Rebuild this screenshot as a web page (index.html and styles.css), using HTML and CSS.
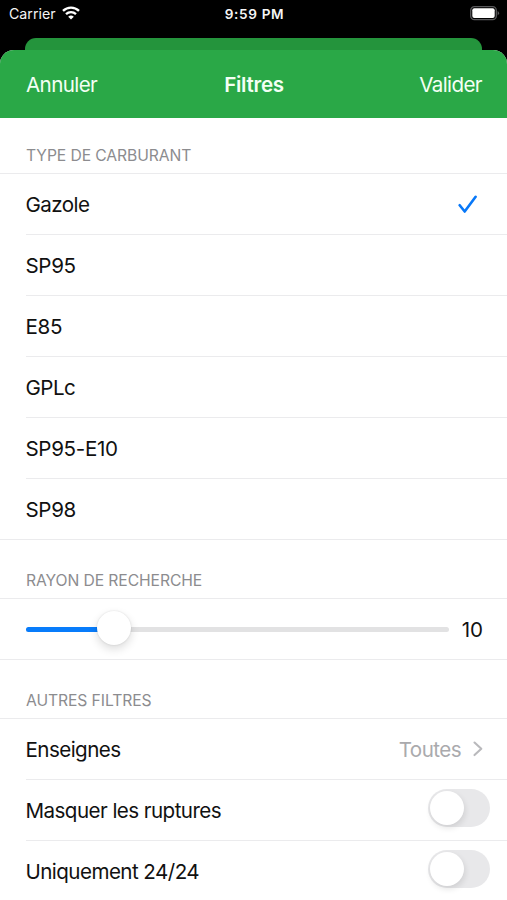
FILE: index.html
```html
<!DOCTYPE html>
<html lang="fr">
<head>
<meta charset="utf-8">
<meta name="viewport" content="width=device-width">
<title>Filtres</title>
<link rel="stylesheet" href="styles.css">
</head>
<body>
<header class="status">
  <div class="carrier"><span>Carrier</span>
    <svg width="18" height="14" viewBox="0 0 18 14" fill="none" stroke="#fff" stroke-width="2.3"><path d="M1 4.9C5.5.4 12.5.4 17 4.9M4 8.2c2.9-2.8 7.100-2.800 10 0"/><path d="M9 13.500 6.200 10.700q2.800-2.300 5.600 0z" fill="#fff" stroke="none"/></svg>
  </div>
  <span class="time">9:59 PM</span>
  <svg class="battery" width="30" height="15" viewBox="0 0 30 15"><rect x=".7" y=".7" width="25.600" height="13" rx="3.700" fill="none" stroke="#59595b" stroke-width="1.300"/><rect x="2.300" y="2.300" width="22.400" height="9.800" rx="2" fill="#fff"/><path d="M27.600 5q3 2.200 0 4.400z" fill="#59595b"/></svg>
</header>
<div class="back-card"></div>
<main class="sheet">
  <nav class="navbar"><span class="cancel">Annuler</span><h1>Filtres</h1><span class="confirm">Valider</span></nav>
  <section>
    <h2>TYPE DE CARBURANT</h2>
    <ul>
      <li><span class="label">Gazole</span><svg class="check" width="20" height="20" viewBox="0 0 20 20" fill="none" stroke="#0878f8" stroke-width="2.600" stroke-linecap="round" stroke-linejoin="round"><path d="m1.700 11.200 5 6.300L17.600 2.800"/></svg></li>
      <li><span class="label code">SP95</span></li>
      <li><span class="label code">E85</span></li>
      <li><span class="label">GPLc</span></li>
      <li><span class="label code">SP95-E10</span></li>
      <li><span class="label code">SP98</span></li>
    </ul>
  </section>
  <section>
    <h2>RAYON DE RECHERCHE</h2>
    <div class="range-row"><div class="track"><div class="fill"></div><div class="thumb"></div></div><span class="value">10</span></div>
  </section>
  <section>
    <h2>AUTRES FILTRES</h2>
    <ul>
      <li><span class="label">Enseignes</span><span class="detail"><span class="label">Toutes</span><svg width="10" height="16" viewBox="0 0 10 16" fill="none" stroke="#b9b9bc" stroke-width="2.100" stroke-linecap="round" stroke-linejoin="round"><path d="m1.500 1.500 6.800 6.300-6.800 6.300"/></svg></span></li>
      <li><span class="label">Masquer les ruptures</span><span class="switch"></span></li>
      <li><span class="label">Uniquement 24/24</span><span class="switch"></span></li>
    </ul>
  </section>
</main>
</body>
</html>
```
FILE: styles.css
```css
* { box-sizing: border-box; }
body { margin: 0; height: 900px; overflow: hidden; background: #000; color: #111; font: 20.6px/26px Inter, "Liberation Sans", sans-serif; }
.status { height: 38px; padding: 6px 7px 0 9px; display: grid; grid-template-columns: 1fr auto 1fr; align-items: start; color: #f5f5f5; font-size: 14.2px; line-height: 16px; }
.carrier { display: flex; gap: 6px; }
.time { font-size: 13.6px; font-weight: 600; letter-spacing: .65px; }
.battery { justify-self: end; }
.back-card { height: 12px; margin: 0 25px; background: #24943c; border-radius: 11px 11px 0 0; }
.sheet { height: 850px; background: #fff; border-radius: 14px 14px 0 0; overflow: hidden; }
.navbar { height: 68px; padding: 2px 25px 0 26px; background: #2aa847; color: #f3fff4; display: grid; grid-template-columns: 1fr auto 1fr; align-items: center; letter-spacing: -.6px; }
.confirm { justify-self: end; }
h1 { margin: 0; font-size: 20.6px; font-weight: 600; letter-spacing: -.3px; }
h2 { margin: 0; height: 55px; padding: 28px 26px 0; color: #8c8c8f; font-size: 15.7px; line-height: 20px; font-weight: 400; letter-spacing: -.1px; }
ul { list-style: none; margin: 0; padding: 0; border: solid #ebebed; border-width: 1px 0; }
li { height: 61px; margin-left: 25.500px; display: flex; align-items: center; justify-content: space-between; border-bottom: 1px solid #ebebed; }
li:last-child { height: 60px; border-bottom: 0; }
.label { padding-top: 2px; letter-spacing: -.56px; }
.code { letter-spacing: -.35px; }
.check { margin-right: 29px; }
section:nth-of-type(n+2) h2 { height: 58px; padding-top: 31px; }
.range-row { height: 62px; padding: 0 24px 0 26px; display: flex; align-items: center; justify-content: space-between; border: solid #ebebed; border-width: 1px 0; }
.value { padding-top: 2px; }
.track { position: relative; width: 423px; height: 5px; border-radius: 3px; background: #e2e2e3; }
.fill { width: 88px; height: 5px; border-radius: 3px; background: #087cfb; }
.thumb { position: absolute; left: 71px; top: -16px; width: 34px; height: 34px; border-radius: 50%; background: #fff; box-shadow: 0 4px 10px #00000024, 0 0 2px #00000020; }
.detail { display: flex; align-items: center; gap: 12px; margin-right: 24px; color: #aaaaad; }
.switch { width: 62px; height: 38px; margin: 0 17px 4px 0; padding: 2px; border-radius: 19px; background: #e8e8ea; }
.switch::before { content: ""; display: block; width: 34px; height: 34px; border-radius: 50%; background: #fff; box-shadow: 1px 3px 6px #0000001c; }
```
